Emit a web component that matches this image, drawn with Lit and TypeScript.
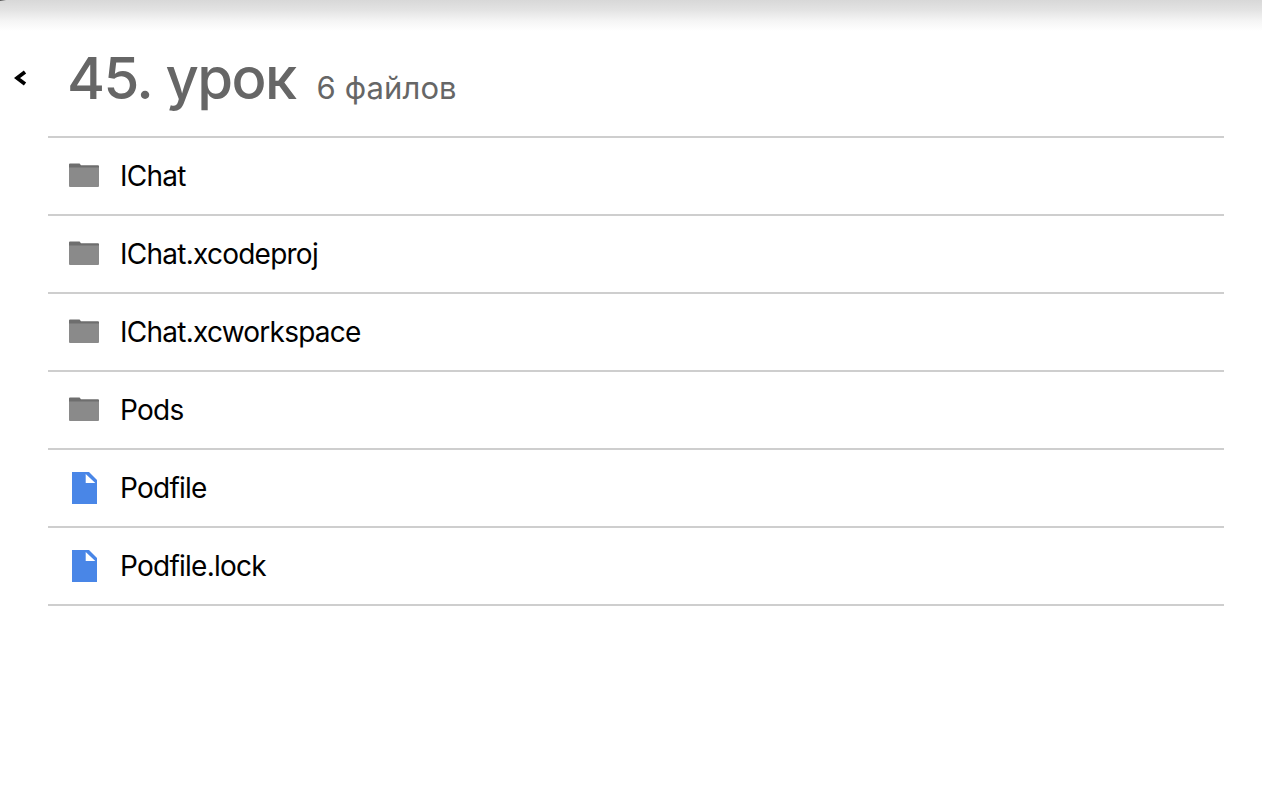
import { LitElement, html, css, svg } from "lit";
import { customElement, property } from "lit/decorators.js";

interface Entry {
  name: string;
  kind: "folder" | "file";
}

const ENTRIES: Entry[] = [
  { name: "IChat", kind: "folder" },
  { name: "IChat.xcodeproj", kind: "folder" },
  { name: "IChat.xcworkspace", kind: "folder" },
  { name: "Pods", kind: "folder" },
  { name: "Podfile", kind: "file" },
  { name: "Podfile.lock", kind: "file" },
];

const folderShape = svg`
  <path fill="#6e6e6e" d="M5 6.5a1 1 0 0 1 1-1h9.6l1.4 1.8h17a1 1 0 0 1 1 1V13H5z" />
  <path fill="#8a8a8a" d="M5 9.6h30v18.4a1 1 0 0 1-1 1H6a1 1 0 0 1-1-1z" />
`;

const fileShape = svg`
  <path fill="#4986e7" fill-rule="evenodd" d="M8 2h17l8 8v24H8zM21.7 4v9h9.6z" />
`;

@customElement("file-row")
export class FileRow extends LitElement {
  static styles = css`
    :host {
      display: flex;
      align-items: center;
      box-sizing: border-box;
      height: 78px;
      padding-left: 16px;
      border-bottom: 2px solid #cecece;
    }
    .icon {
      flex: none;
      width: 40px;
      height: 36px;
    }
    .name {
      margin-left: 16px;
      color: #000;
      font-size: 28px;
      line-height: 36px;
      letter-spacing: -0.75px;
      white-space: nowrap;
    }
  `;

  @property() name = "";
  @property() kind: Entry["kind"] = "file";

  render() {
    return html`
      <svg class="icon" viewBox="0 0 40 36">
        ${this.kind === "folder" ? folderShape : fileShape}
      </svg>
      <span class="name">${this.name}</span>
    `;
  }
}

@customElement("app-root")
export class AppRoot extends LitElement {
  static styles = css`
    :host {
      display: block;
      box-sizing: border-box;
      height: 802px;
      overflow: hidden;
      background:
        linear-gradient(90deg, #555, #d8d8d8) no-repeat 0 0 / 6px 1px,
        linear-gradient(#d8d8d8, #e3e3e3 10px, #f5f5f5 21px, #fff 31px) no-repeat #fff;
      font-family: Inter, "Liberation Sans", sans-serif;
    }
    .header {
      display: flex;
      align-items: center;
      box-sizing: border-box;
      height: 136px;
      padding: 20px 0 0 14px;
    }
    .back {
      display: flex;
      padding: 0;
      border: 0;
      background: none;
    }
    .title {
      display: flex;
      align-items: baseline;
      margin: 0 0 0 39px;
      padding-top: 9px;
      color: #666;
      font-size: 58px;
      font-weight: 500;
      line-height: 72px;
      letter-spacing: -1.6px;
      white-space: nowrap;
    }
    .count {
      margin-left: 21px;
      font-size: 31px;
      font-weight: 400;
      letter-spacing: 0.1px;
    }
    .list {
      margin: 0 38px 0 48px;
      border-top: 2px solid #cecece;
    }
  `;

  render() {
    return html`
      <div class="header">
        <button class="back" aria-label="Назад">
          <svg width="14" height="18" viewBox="0 0 14 18">
            <path d="M11 2.9 3 9l8 6.1" fill="none" stroke="#000" stroke-width="3.8" />
          </svg>
        </button>
        <h1 class="title">45. урок<span class="count">6 файлов</span></h1>
      </div>
      <div class="list">
        ${ENTRIES.map(
          (entry) => html`<file-row .name=${entry.name} .kind=${entry.kind}></file-row>`
        )}
      </div>
    `;
  }
}
